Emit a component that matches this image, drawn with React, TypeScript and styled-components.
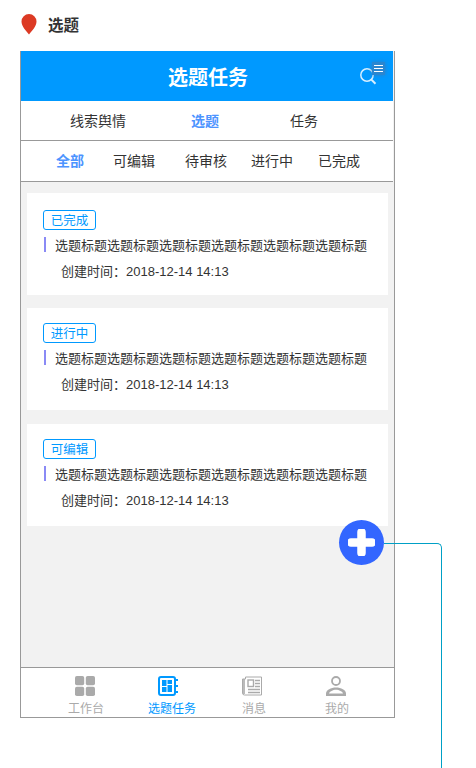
import React from "react";
import styled, { createGlobalStyle } from "styled-components";

const Global = createGlobalStyle`
  html, body { margin: 0; padding: 0; background: #fff; }
  body { font-family: "Noto Sans CJK SC", "Liberation Sans", sans-serif; overflow: hidden; }
`;
const Page = styled.div`position: relative; width: 476px; height: 768px; overflow: hidden;`;
const PageTitle = styled.div`
  height: 51px; display: flex; align-items: center; padding: 0 0 4px 20px; box-sizing: border-box;
  gap: 10px; font-size: 15.5px; font-weight: 700; color: #333;
`;
const Frame = styled.div`
  margin-left: 20px; width: 375px; height: 667px; box-sizing: border-box;
  border: 1px solid #999; border-top: 0; display: flex; flex-direction: column; background: #f2f2f2;
`;
const Header = styled.header`
  position: relative; height: 50px; margin-right: 1px; background: #0099ff; color: #fff; flex: none;
  display: flex; align-items: center; justify-content: center;
  font-size: 20px; font-weight: 700; padding-left: 2px; box-sizing: border-box;
`;
const SearchIcon = styled.svg`position: absolute; left: 338px; top: 16px;`;
const MenuBadge = styled.div`
  position: absolute; left: 351px; top: 11px; width: 13px; height: 13px; background: #2a86d0;
  box-shadow: 0 0 4px rgba(60,120,180,.8); display: flex; flex-direction: column; justify-content: center;
  align-items: center; gap: 2px;
  & > i { display: block; width: 9px; height: 1px; background: #fff; }
`;
const MainTabs = styled.nav`
  height: 37px; flex: none; background: #fff; border-bottom: 1px solid #999; margin-right: 1px;
  display: grid; grid-template-columns: 121px 99px auto; align-items: center; padding: 0 0 2px 49px;
`;
const SubTabs = styled.nav`
  height: 38px; flex: none; background: #fff; border-bottom: 1px solid #999; margin-right: 1px;
  display: grid; grid-template-columns: 57px 72px 66px 67px auto; align-items: center; padding: 0 0 2px 35px;
`;
const Tab = styled.span<{ $active?: boolean }>`
  font-size: 14px; line-height: 20px; white-space: nowrap; color: ${p => (p.$active ? "#4d94ff" : "#333")};
  font-weight: ${p => (p.$active ? 700 : 400)};
`;
const List = styled.main`
  flex: 1; display: flex; flex-direction: column; padding: 11px 0 0 6px;
`;
const Card = styled.article<{ $top: number; $gap: number }>`
  width: 361px; height: 102px; background: #fff; box-sizing: border-box; flex: none;
  margin-top: ${p => p.$gap}px; padding: ${p => p.$top}px 0 0 16px;
`;
const Tag = styled.span`
  display: flex; align-items: center; justify-content: center; width: 53px; height: 20px; box-sizing: border-box;
  border: 1px solid #0099ff; border-radius: 3px; color: #0099ff; font-size: 12.5px; line-height: 16px;
`;
const CardTitle = styled.div`
  margin: 6px 0 0 1px; height: 16px; display: flex; align-items: center; gap: 9px; font-size: 13px; color: #333; white-space: nowrap;
  &::before { content: ""; width: 2px; height: 15px; background: #8a8af5; flex: none; }
`;
const CardMeta = styled.div`
  margin: 10px 0 0 18px; font-size: 13px; line-height: 18px; color: #333; white-space: nowrap;
`;
const DateText = styled.span`font-family: "Liberation Sans", sans-serif;`;
const BottomNav = styled.nav`
  height: 49px; flex: none; background: #fff; border-top: 1px solid #999;
  display: grid; grid-template-columns: 84px 88px 76px 90px; padding-left: 23px;
`;
const NavItem = styled.div<{ $active?: boolean }>`
  display: flex; flex-direction: column; align-items: center; padding-top: 8px;
  color: ${p => (p.$active ? "#0099ff" : "#aaa")}; font-size: 12px; line-height: 16px;
  & > span { margin-top: 4px; }
`;
const NavIcon = styled.div<{ $nudge: number }>`
  display: flex; height: 20px; margin-right: ${p => p.$nudge}px;
`;
const Fab = styled.div`
  position: absolute; left: 339px; top: 520px; width: 45px; height: 45px; border-radius: 50%; background: #3366ff;
  display: flex; align-items: center; justify-content: center;
`;
const Connector = styled.div`
  position: absolute; left: 384px; top: 543px; width: 58px; height: 240px; box-sizing: border-box;
  border-top: 1px solid #00a0c6; border-right: 1px solid #00a0c6; border-top-right-radius: 5px;
`;

const Pin = () => (
  <svg width="18" height="22" viewBox="0 0 18 22">
    <path d="M9 21.5C6 17.5 1.5 13.5 1.5 8.5a7.5 7.5 0 0 1 15 0C16.5 13.5 12 17.5 9 21.5z" fill="#dc3a24" />
  </svg>
);
const GridIcon = () => (
  <svg width="20" height="20" viewBox="0 0 20 20" fill="#aaa">
    <rect x="0" y="0" width="9.2" height="9.2" rx="1.8" />
    <rect x="10.8" y="0" width="9.2" height="9.2" rx="1.8" />
    <rect x="0" y="10.8" width="9.2" height="9.2" rx="1.8" />
    <rect x="10.8" y="10.8" width="9.2" height="9.2" rx="1.8" />
  </svg>
);
const BookIcon = () => (
  <svg width="20" height="20" viewBox="0 0 20 20">
    <rect x="1" y="1" width="16" height="18" rx="2" fill="none" stroke="#0099ff" strokeWidth="2" />
    <rect x="4" y="4" width="4.5" height="6" fill="#0099ff" />
    <rect x="4" y="11" width="4.5" height="5" fill="#0099ff" />
    <rect x="9.5" y="4" width="4.5" height="4" fill="#0099ff" />
    <rect x="9.5" y="9" width="4.5" height="7" fill="#0099ff" />
    <path d="M18 4h2M18 10h2M18 16h2" stroke="#0099ff" strokeWidth="2" />
  </svg>
);
const NewsIcon = () => (
  <svg width="20" height="20" viewBox="0 0 20 20" fill="none" stroke="#aaa">
    <path d="M3.500 1h16v18H2.500a2 2 0 0 1-2-2V3h3z" strokeWidth="1" />
    <path d="M2 3v15" strokeWidth="1.600" />
    <rect x="6" y="4" width="5.500" height="6.500" strokeWidth="1.400" />
    <path d="M13 4.500h5M13 7.500h5M13 10.500h5M6 13.500h12M6 16.500h12" strokeWidth="1.400" />
  </svg>
);
const UserIcon = () => (
  <svg width="20" height="20" viewBox="0 0 20 20">
    <circle cx="10" cy="5" r="4" fill="none" stroke="#aaa" strokeWidth="1.800" />
    <path d="M0 20v-2.500C0 14 5 11.500 10 11.500s10 2.500 10 6V20z" fill="#aaa" />
    <path d="M3 17.500c.5-2 4-3.800 7-3.800s6.500 1.800 7 3.800z" fill="#fff" />
  </svg>
);

const cards = [
  { label: "已完成", top: 17, gap: 0 },
  { label: "进行中", top: 15, gap: 13 },
  { label: "可编辑", top: 15, gap: 14 },
];

export default function App() {
  return (
    <Page>
      <Global />
      <PageTitle><Pin />选题</PageTitle>
      <Frame>
        <Header>
          选题任务
          <SearchIcon width="20" height="20" viewBox="0 0 20 20" fill="none" stroke="#d8efff" strokeWidth="1.500">
            <circle cx="8" cy="8" r="6.200" />
            <path d="M12.500 12.800l4 4" strokeWidth="2" />
          </SearchIcon>
          <MenuBadge><i /><i /><i /></MenuBadge>
        </Header>
        <MainTabs>
          <Tab>线索舆情</Tab>
          <Tab $active>选题</Tab>
          <Tab>任务</Tab>
        </MainTabs>
        <SubTabs>
          <Tab $active>全部</Tab>
          <Tab>可编辑</Tab>
          <Tab>待审核</Tab>
          <Tab>进行中</Tab>
          <Tab>已完成</Tab>
        </SubTabs>
        <List>
          {cards.map(c => (
            <Card key={c.label} $top={c.top} $gap={c.gap}>
              <Tag>{c.label}</Tag>
              <CardTitle>选题标题选题标题选题标题选题标题选题标题选题标题</CardTitle>
              <CardMeta>创建时间：<DateText>2018-12-14 14:13</DateText></CardMeta>
            </Card>
          ))}
        </List>
        <BottomNav>
          <NavItem><NavIcon $nudge={2}><GridIcon /></NavIcon><span>工作台</span></NavItem>
          <NavItem $active><NavIcon $nudge={8}><BookIcon /></NavIcon><span>选题任务</span></NavItem>
          <NavItem><NavIcon $nudge={4}><NewsIcon /></NavIcon><span>消息</span></NavItem>
          <NavItem><NavIcon $nudge={2}><UserIcon /></NavIcon><span>我的</span></NavItem>
        </BottomNav>
      </Frame>
      <Connector />
      <Fab>
        <svg width="27" height="27" viewBox="0 0 27 27">
          <path d="M13.500 3v21M3 13.500h21" stroke="#fff" strokeWidth="8.500" strokeLinecap="round" />
        </svg>
      </Fab>
    </Page>
  );
}
